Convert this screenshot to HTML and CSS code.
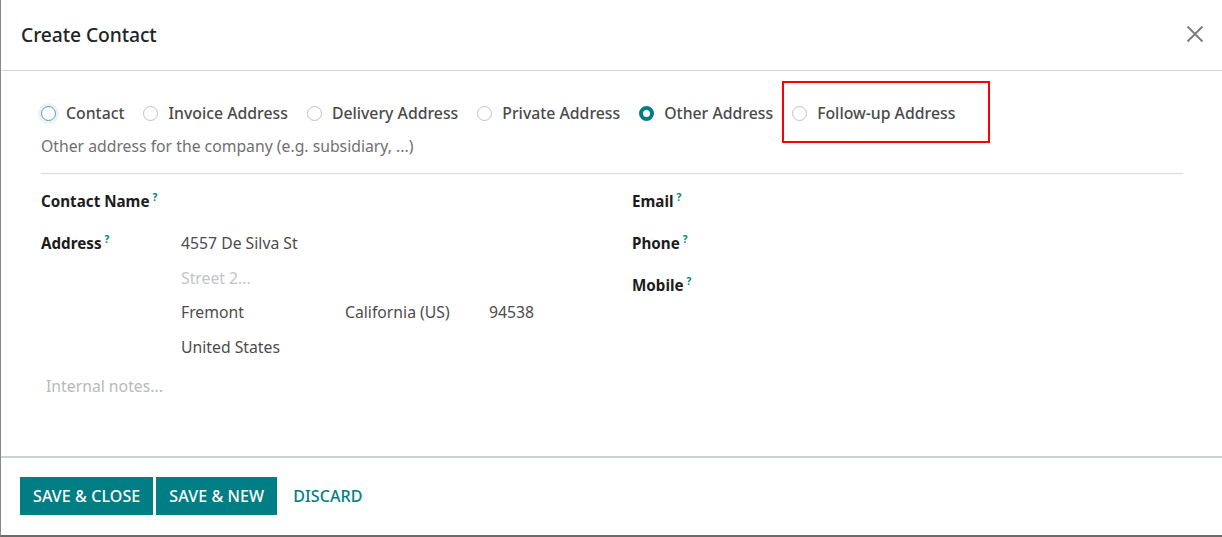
FILE: index.html
```html
<!DOCTYPE html>
<html>
<head>
<meta charset="utf-8">
<link rel="stylesheet" href="styles.css">
</head>
<body>
<div class="modal">
  <header class="modal-header">
    <h4 class="modal-title">Create Contact</h4>
    <button class="close" aria-label="Close">
      <svg width="18" height="18" viewBox="0 0 18 18"><path d="M1.5 1.5 L16.5 16.5 M16.5 1.5 L1.5 16.5" stroke="#7a7a7a" stroke-width="1.8" fill="none"/></svg>
    </button>
  </header>
  <main class="modal-body">
    <div class="radios">
      <label class="radio focus"><span class="dot"></span>Contact</label>
      <label class="radio"><span class="dot"></span>Invoice Address</label>
      <label class="radio"><span class="dot"></span>Delivery Address</label>
      <label class="radio"><span class="dot"></span>Private Address</label>
      <label class="radio checked"><span class="dot"></span>Other Address</label>
      <label class="radio highlight"><span class="dot"></span>Follow-up Address<span class="redbox"></span></label>
    </div>
    <p class="desc">Other address for the company (e.g. subsidiary, ...)</p>
    <hr class="sep">
    <div class="grid">
      <div class="col">
        <div class="row"><div class="lbl">Contact Name<sup>?</sup></div><div class="val"></div></div>
        <div class="row addr">
          <div class="lbl">Address<sup>?</sup></div>
          <div class="val">
            <div class="line">4557 De Silva St</div>
            <div class="line ph">Street 2...</div>
            <div class="line split"><span class="city">Fremont</span><span class="state">California (US)</span><span class="zip">94538</span></div>
            <div class="line">United States</div>
          </div>
        </div>
        <div class="notes">Internal notes...</div>
      </div>
      <div class="col">
        <div class="row"><div class="lbl">Email<sup>?</sup></div></div>
        <div class="row"><div class="lbl">Phone<sup>?</sup></div></div>
        <div class="row"><div class="lbl">Mobile<sup>?</sup></div></div>
      </div>
    </div>
  </main>
  <footer class="modal-footer">
    <button class="btn primary">SAVE &amp; CLOSE</button>
    <button class="btn primary">SAVE &amp; NEW</button>
    <button class="btn link">DISCARD</button>
  </footer>
</div>
</body>
</html>
```
FILE: styles.css
```css
* { box-sizing: border-box; }
html, body { margin: 0; padding: 0; background: #fff; }
body {
  font-family: "Noto Sans", "Open Sans", sans-serif;
  font-size: 15.75px;
  color: #4c4c4c;
  width: 1222px;
  height: 537px;
  overflow: hidden;
}
.modal {
  height: 537px;
  border-left: 1px solid #8a8a8a;
  border-bottom: 2px solid #6a6a6a;
  display: flex;
  flex-direction: column;
  background: #fff;
}
.modal-header {
  height: 71px;
  border-bottom: 1px solid #d3d5d9;
  display: flex;
  align-items: center;
  justify-content: space-between;
  padding: 0 18px 0 20px;
  flex: none;
}
.modal-title {
  margin: 0 0 2px 0;
  font-size: 19.3px;
  font-weight: 500;
  color: #212529;
  letter-spacing: -0.1px;
}
.close {
  border: 0;
  background: none;
  padding: 0;
  width: 18px;
  height: 18px;
  margin-top: -2px;
  cursor: pointer;
}
.modal-body {
  flex: 1;
  padding: 0 39px 0 40px;
}
.radios {
  display: flex;
  align-items: center;
  height: 36px;
  margin-top: 24px;
  font-size: 15.8px;
}
.radio {
  position: relative;
  display: flex;
  align-items: center;
  font-weight: 500;
  color: #4a4a4a;
  margin-right: 19px;
  white-space: nowrap;
}
.dot {
  width: 15px;
  height: 15px;
  border-radius: 50%;
  border: 1px solid #c2c2c2;
  margin-right: 10px;
  flex: none;
  background: #fff;
}
.radio.focus .dot {
  border-color: #4da6a9;
  box-shadow: 0 0 0 3px #edf3f4;
}
.radio.checked .dot {
  border: 4.5px solid #017e84;
}
.redbox {
  position: absolute;
  left: -10px;
  top: -21px;
  width: 208px;
  height: 62px;
  border: 2px solid #f00;
  pointer-events: none;
}
.desc {
  margin: 0;
  height: 36px;
  line-height: 30px;
  color: #707070;
}
.sep {
  margin: 6px 0 0 0;
  border: 0;
  border-top: 1px solid #d9d9d9;
}
.grid {
  display: grid;
  grid-template-columns: 551px 551px;
  column-gap: 40px;
  padding-top: 13px;
}
.row {
  display: flex;
  min-height: 42px;
}
.lbl {
  width: 140px;
  flex: none;
  font-weight: 700;
  font-size: 15.2px;
  color: #1c1c1c;
  line-height: 28px;
  white-space: nowrap;
}
.lbl sup {
  color: #017e84;
  font-size: 10px;
  font-weight: 700;
  margin-left: 3px;
  vertical-align: 6px;
  line-height: 0;
}
.val { flex: 1; }
.addr .line {
  height: 34.5px;
  line-height: 30px;
}
.addr .val { margin-top: -1px; }
.ph { color: #c2c5c8; }
.split { display: flex; }
.city { width: 164px; }
.state { width: 144px; }
.notes {
  color: #b7b9bb;
  padding-left: 5px;
  margin-top: 6px;
  line-height: 28px;
}
.modal-footer {
  height: 79px;
  flex: none;
  border-top: 2px solid #cfd2d5;
  display: flex;
  align-items: center;
  padding: 0 0 1px 19px;
  gap: 3px;
}
.btn {
  font-family: inherit;
  font-size: 16px;
  font-weight: 500;
  height: 38px;
  border: 0;
  padding: 0 13px;
  cursor: pointer;
  letter-spacing: 0.1px;
}
.btn.primary {
  background: #017e84;
  color: #fff;
}
.btn.link {
  background: none;
  color: #017e84;
  padding: 0 0 0 13px;
}
```
